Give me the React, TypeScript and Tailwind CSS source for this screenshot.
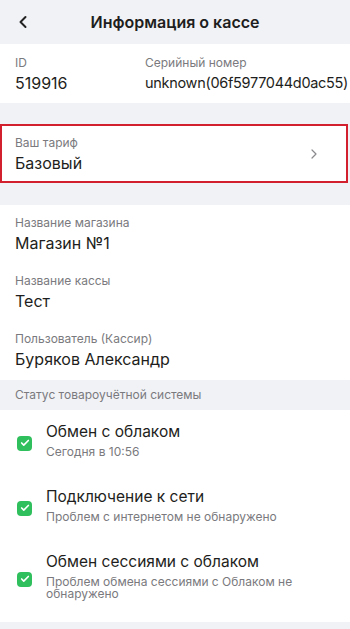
import { ChevronLeft, ChevronRight, Check } from "lucide-react";

const Field = ({ label, value, valueClass = "text-[16px]" }: { label: string; value: string; valueClass?: string }) => (
  <div className="flex flex-col">
    <span className="text-[12px] leading-[16px] text-[#7a7a7e]">{label}</span>
    <span className={"mt-[2px] leading-[20px] text-[#1e1e20] " + valueClass}>{value}</span>
  </div>
);

const StatusItem = ({ title, note }: { title: string; note: string }) => (
  <div className="flex items-center gap-[14px] pl-[17px] pr-4">
    <div className="mt-[6px] flex h-[15px] w-[15px] shrink-0 items-center justify-center rounded-[4px] bg-[#2fbf5c]">
      <Check className="h-[10px] w-[10px] text-white" strokeWidth={4} />
    </div>
    <div className="flex flex-col">
      <span className="text-[15.5px] leading-[20px] text-[#1e1e20]">{title}</span>
      <span className="mt-[4px] text-[12px] leading-[12px] text-[#7a7a7e]">{note}</span>
    </div>
  </div>
);

export default function App() {
  return (
    <div
      className="flex min-h-[629px] w-[350px] flex-col bg-[#f1f2f6]"
      style={{ fontFamily: "Inter, Roboto, 'Noto Sans', sans-serif" }}
    >
      {/* Header */}
      <div className="relative flex h-[44px] items-center justify-center">
        <ChevronLeft className="absolute left-[13px] top-[12px] h-[20px] w-[20px] text-[#222]" strokeWidth={2.4} />
        <span className="text-[16px] font-semibold text-[#1e1e20]">Информация о кассе</span>
      </div>

      {/* ID / serial */}
      <div className="flex h-[59px] items-center bg-white px-[15px]">
        <div className="w-[130px] shrink-0">
          <Field label="ID" value="519916" />
        </div>
        <Field
          label="Серийный номер"
          value="unknown(06f5977044d0ac55)"
          valueClass="whitespace-nowrap text-[14.5px] tracking-[-0.3px]"
        />
      </div>

      {/* Tariff */}
      <div className="mr-[2px] mt-[21px] flex h-[59px] items-center justify-between border-2 border-[#d3202f] bg-white pl-[13px] pr-[24px]">
        <Field label="Ваш тариф" value="Базовый" />
        <ChevronRight className="h-[16px] w-[16px] text-[#8a8a8e]" strokeWidth={1.8} />
      </div>

      {/* Shop info */}
      <div className="mt-[22px] flex flex-col gap-[20px] bg-white px-[15px] pb-[11px] pt-[10px]">
        <Field label="Название магазина" value="Магазин №1" />
        <Field label="Название кассы" value="Тест" />
        <Field label="Пользователь (Кассир)" value="Буряков Александр" />
      </div>

      {/* Status header */}
      <div className="flex h-[30px] items-center px-[15px] text-[12px] text-[#7a7a7e]">
        Статус товароучётной системы
      </div>

      {/* Status list */}
      <div className="flex flex-col gap-[29px] bg-white pb-[22px] pt-[12px]">
        <StatusItem title="Обмен с облаком" note="Сегодня в 10:56" />
        <StatusItem title="Подключение к сети" note="Проблем с интернетом не обнаружено" />
        <StatusItem title="Обмен сессиями с облаком" note="Проблем обмена сессиями с Облаком не обнаружено" />
      </div>
    </div>
  );
}
